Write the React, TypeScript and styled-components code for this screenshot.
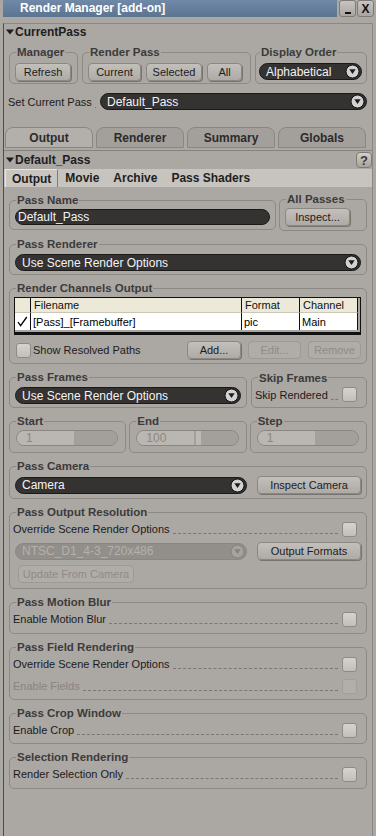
import styled, { createGlobalStyle } from "styled-components";

const GlobalStyle = createGlobalStyle`
  * { box-sizing: border-box; }
  html, body { margin: 0; padding: 0; background: #aba7a3; }
  body {
    font-family: "Liberation Sans", Arial, sans-serif;
    font-size: 11px;
    color: #1b1b1b;
  }
`;

const Window = styled.div`
  width: 376px;
  height: 836px;
  display: flex;
  flex-direction: column;
  background: #aba7a3;
  overflow: hidden;
`;

const TitleBar = styled.div`
  display: flex;
  height: 17px;
  padding: 0 2px 0 3px;
  gap: 1px;
`;

const Title = styled.div`
  flex: 1;
  margin-right: 1px;
  padding-left: 17px;
  background: linear-gradient(#7089a6, #5a7492);
  color: #fff;
  font-weight: bold;
  font-size: 12px;
  line-height: 17px;
`;

const WinButton = styled.div`
  width: 17px;
  height: 17px;
  display: flex;
  align-items: center;
  justify-content: center;
  background: linear-gradient(#c8c4c0, #a8a4a0);
  border: 1px solid #7e7a76;
  border-radius: 3px;
  font-weight: bold;
  font-size: 12px;
  color: #111;
`;

const MinGlyph = styled.div`
  width: 6px;
  height: 2px;
  margin-top: 8px;
  background: #111;
`;

const Frame = styled.div`
  flex: 1;
  margin: 6px 3px 0;
  border-top: 1px solid #8b8783;
  border-left: 1px solid #4f4c49;
  border-right: 1px solid #8b8783;
  display: flex;
  flex-direction: column;
`;

const SectionHead = styled.div<{ $h?: number }>`
  display: flex;
  align-items: center;
  height: ${(p) => p.$h ?? 15}px;
  padding-left: 2px;
  font-weight: bold;
  font-size: 12px;
  color: #1e1e1e;
`;

const CaretIcon = styled.svg`
  margin-right: 1px;
  flex: none;
`;

const HelpButton = styled.div`
  margin-left: auto;
  width: 16px;
  height: 16px;
  display: flex;
  align-items: center;
  justify-content: center;
  border: 1px solid #7e7a76;
  border-radius: 4px;
  background: linear-gradient(#d2cec9, #a6a29e);
  font-weight: bold;
  font-size: 13px;
  color: #3a3a3a;
`;

const TopRow = styled.div`
  display: flex;
  gap: 4px;
  margin-top: 7px;
  padding: 0 5px;
`;

const Row = styled.div<{ $gap?: number; $mt?: number; $pl?: number }>`
  display: flex;
  align-items: center;
  gap: ${(p) => p.$gap ?? 0}px;
  margin-top: ${(p) => p.$mt ?? 0}px;
  padding-left: ${(p) => p.$pl ?? 0}px;
`;

const Group = styled.fieldset<{ $w?: number; $pt?: number; $pb?: number; $px?: number }>`
  margin: 0;
  min-width: 0;
  ${(p) => (p.$w ? `flex: none; width: ${p.$w}px;` : `flex: 1;`)}
  padding: ${(p) => p.$pt ?? 4}px ${(p) => p.$px ?? 5}px ${(p) => p.$pb ?? 3}px;
  border: 1px solid #8d8985;
  border-radius: 5px;
  display: flex;
  flex-direction: column;
`;

const Legend = styled.legend`
  padding: 0 1px;
  margin-left: 1px;
  font-weight: bold;
  font-size: 11.5px;
  line-height: 12px;
  color: #3b3b3b;
`;

const Button = styled.button<{ $w: number }>`
  flex: none;
  width: ${(p) => p.$w}px;
  height: 18px;
  padding: 0;
  font-family: inherit;
  font-size: 11px;
  color: #1c1c1c;
  background: linear-gradient(#c3bfbb, #aeaaa6);
  border: 1px solid #8b8783;
  border-radius: 4px;
  box-shadow: 1px 1px 0 #77736f;
  &:disabled {
    color: #8f8b87;
    background: #b0aca8;
    border-color: #9d9995;
    box-shadow: none;
  }
`;

const SelectBox = styled.div<{ $w?: number; $disabled?: boolean }>`
  display: flex;
  align-items: center;
  height: 17px;
  ${(p) => (p.$w ? `flex: none; width: ${p.$w}px;` : `flex: 1;`)}
  padding: 0 1px 0 6px;
  border-radius: 9px;
  background: ${(p) => (p.$disabled ? "#928e8a" : "#353232")};
  border: 1px solid ${(p) => (p.$disabled ? "#8a8682" : "#1a1818")};
  color: ${(p) => (p.$disabled ? "#b5b1ad" : "#f3f3f3")};
  font-size: 12px;
  white-space: nowrap;
  overflow: hidden;
`;

const TextBox = styled(SelectBox)`
  height: 18px;
  padding-left: 2px;
`;

const SelectText = styled.span`
  flex: 1;
`;

const Label = styled.span<{ $disabled?: boolean; $ml?: number }>`
  font-size: 11px;
  white-space: nowrap;
  margin-left: ${(p) => p.$ml ?? 0}px;
  color: ${(p) => (p.$disabled ? "#88847f" : "#1b1b1b")};
`;

const Leader = styled.div<{ $mb?: number }>`
  flex: 1;
  align-self: flex-end;
  margin: 0 4px ${(p) => p.$mb ?? 5}px 3px;
  border-bottom: 1px dashed #7b7773;
`;

const Check = styled.div<{ $disabled?: boolean }>`
  flex: none;
  width: 15px;
  height: 15px;
  border-radius: 3px;
  border: 1px solid ${(p) => (p.$disabled ? "#a29e9a" : "#8e8a86")};
  background: ${(p) => (p.$disabled ? "#b2aeaa" : "linear-gradient(#d6d2ce, #c2beba)")};
`;

const CheckRow = styled.div<{ $mt?: number }>`
  display: flex;
  align-items: center;
  height: 20px;
  margin: ${(p) => p.$mt ?? 0}px 4px 0 -2px;
`;

const SetRow = styled.div`
  display: flex;
  align-items: center;
  height: 17px;
  margin-top: 9px;
  padding: 0 5px 0 4px;
`;

const TabStrip = styled.div`
  display: flex;
  gap: 3px;
  height: 24px;
  margin-top: 17px;
  padding-left: 1px;
  border-bottom: 1px solid #85817d;
`;

const Tab = styled.div<{ $active?: boolean }>`
  width: 88px;
  height: 21px;
  display: flex;
  align-items: center;
  justify-content: center;
  border: 1px solid #8a8682;
  border-radius: 8px 8px 0 0;
  background: ${(p) => (p.$active ? "#b3afab" : "#a39f9b")};
  font-weight: bold;
  font-size: 12px;
  color: #2b2b2b;
`;

const SubTabBar = styled.div`
  display: flex;
  height: 18px;
  padding-left: 1px;
  background: #c7c3bf;
`;

const SubTab = styled.div<{ $active?: boolean }>`
  display: flex;
  align-items: center;
  padding: 0 6px;
  font-weight: bold;
  font-size: 12px;
  color: #1e1e1e;
  ${(p) =>
    p.$active
      ? `border-left: 1px solid #e8e4e0; border-top: 1px solid #e8e4e0; border-right: 1px solid #7f7b77; background: #c9c5c1;`
      : `border-left: 1px solid transparent; border-right: 1px solid transparent;`}
`;

const Body = styled.div`
  display: flex;
  flex-direction: column;
  gap: 7px;
  padding: 6px 5px 0;
`;

const Table = styled.div`
  margin-left: -1px;
  display: grid;
  grid-template-columns: 16px 211px 58px 58px;
  border: 1px solid #111;
  border-bottom-width: 3px;
  padding-bottom: 2px;
  background: #a9a5a1;
`;

const HeadCell = styled.div`
  height: 15px;
  padding-left: 3px;
  background: #ece9d8;
  border-right: 1px solid #111;
  border-bottom: 1px solid #c9c6b6;
  font-size: 11px;
  line-height: 15px;
  color: #111;
`;

const Cell = styled.div`
  height: 17px;
  display: flex;
  align-items: center;
  padding-left: 2px;
  background: #fff;
  border-right: 1px solid #111;
  font-size: 11px;
  color: #000;
  white-space: nowrap;
`;

const Slider = styled.div`
  display: flex;
  height: 16px;
  margin: 0 2px 0 1px;
  border: 1px solid #8a8682;
  border-radius: 8px;
  overflow: hidden;
`;

const SliderValue = styled.div`
  width: 57px;
  padding-left: 9px;
  background: #bab6b2;
  color: #8b8783;
  font-size: 12px;
  line-height: 14px;
`;

const SliderTrack = styled.div`
  flex: 1;
  position: relative;
  background: #a39f9b;
`;

const Thumb = styled.div`
  position: absolute;
  top: 0;
  bottom: 0;
  left: 2px;
  width: 5px;
  background: #bdb9b5;
`;

const Spacer = styled.div`
  flex: 1;
`;

const Caret = () => (
  <CaretIcon width="8" height="6" viewBox="0 0 8 6">
    <path d="M0 0.5h8L4 5.5z" fill="#1e1e1e" />
  </CaretIcon>
);

const Arrow = ({ disabled }: { disabled?: boolean }) => (
  <svg width="15" height="15" viewBox="0 0 15 15">
    <circle
      cx="7.5"
      cy="7.5"
      r="6.5"
      fill={disabled ? "#a6a29e" : "#d2d2d2"}
      stroke={disabled ? "#86827e" : "#141414"}
    />
    <path d="M4.3 5.3h6.4L7.5 10z" fill={disabled ? "#86827e" : "#1c1c1c"} />
  </svg>
);

const Select = ({ text, w, disabled }: { text: string; w?: number; disabled?: boolean }) => (
  <SelectBox $w={w} $disabled={disabled}>
    <SelectText>{text}</SelectText>
    <Arrow disabled={disabled} />
  </SelectBox>
);

const CheckLine = ({ label, disabled, mt }: { label: string; disabled?: boolean; mt?: number }) => (
  <CheckRow $mt={mt}>
    <Label $disabled={disabled}>{label}</Label>
    <Leader />
    <Check $disabled={disabled} />
  </CheckRow>
);

const NumField = ({ value, thumb }: { value: number; thumb?: boolean }) => (
  <Slider>
    <SliderValue>{value}</SliderValue>
    <SliderTrack>{thumb && <Thumb />}</SliderTrack>
  </Slider>
);

export default function App() {
  return (
    <Window>
      <GlobalStyle />
      <TitleBar>
        <Title>Render Manager [add-on]</Title>
        <WinButton>
          <MinGlyph />
        </WinButton>
        <WinButton>X</WinButton>
      </TitleBar>

      <Frame>
        <SectionHead>
          <Caret />
          CurrentPass
        </SectionHead>

        <TopRow>
          <Group $w={69} $pt={5} $pb={2}>
            <Legend>Manager</Legend>
            <Row>
              <Button $w={56}>Refresh</Button>
            </Row>
          </Group>
          <Group $w={169} $pt={5} $pb={2}>
            <Legend>Render Pass</Legend>
            <Row $gap={5}>
              <Button $w={53}>Current</Button>
              <Button $w={56}>Selected</Button>
              <Button $w={35}>All</Button>
            </Row>
          </Group>
          <Group $pt={5} $pb={2} $px={3}>
            <Legend>Display Order</Legend>
            <Row>
              <Select text="Alphabetical" w={103} />
            </Row>
          </Group>
        </TopRow>

        <SetRow>
          <Label>Set Current Pass</Label>
          <Leader $mb={2} />
          <Select text="Default_Pass" w={267} />
        </SetRow>

        <TabStrip>
          <Tab $active>Output</Tab>
          <Tab>Renderer</Tab>
          <Tab>Summary</Tab>
          <Tab>Globals</Tab>
        </TabStrip>

        <SectionHead $h={18}>
          <Caret />
          Default_Pass
          <HelpButton>?</HelpButton>
        </SectionHead>

        <SubTabBar>
          <SubTab $active>Output</SubTab>
          <SubTab>Movie</SubTab>
          <SubTab>Archive</SubTab>
          <SubTab>Pass Shaders</SubTab>
        </SubTabBar>

        <Body>
          <Row $gap={3}>
            <Group $w={267} $pt={3} $pb={4}>
              <Legend>Pass Name</Legend>
              <TextBox>Default_Pass</TextBox>
            </Group>
            <Group $pt={3} $pb={4}>
              <Legend>All Passes</Legend>
              <Button $w={65}>Inspect...</Button>
            </Group>
          </Row>

          <Group>
            <Legend>Pass Renderer</Legend>
            <Select text="Use Scene Render Options" />
          </Group>

          <Group $pt={3} $pb={4}>
            <Legend>Render Channels Output</Legend>
            <Table>
              <HeadCell />
              <HeadCell>Filename</HeadCell>
              <HeadCell>Format</HeadCell>
              <HeadCell>Channel</HeadCell>
              <Cell>
                <svg width="11" height="11" viewBox="0 0 11 11">
                  <path d="M1 6.2L3.6 9.6L9.8 1" fill="none" stroke="#000" strokeWidth="1.3" />
                </svg>
              </Cell>
              <Cell>[Pass]_[Framebuffer]</Cell>
              <Cell>pic</Cell>
              <Cell>Main</Cell>
            </Table>
            <Row $gap={7} $mt={6} $pl={1}>
              <Check />
              <Label $ml={-5}>Show Resolved Paths</Label>
              <Spacer />
              <Button $w={54}>Add...</Button>
              <Button $w={53} disabled>
                Edit...
              </Button>
              <Button $w={53} disabled>
                Remove
              </Button>
            </Row>
          </Group>

          <Row $gap={4}>
            <Group $w={238}>
              <Legend>Pass Frames</Legend>
              <Select text="Use Scene Render Options" />
            </Group>
            <Group $pt={1} $pb={2}>
              <Legend>Skip Frames</Legend>
              <CheckLine label="Skip Rendered" />
            </Group>
          </Row>

          <Row $gap={3}>
            <Group $pt={3} $pb={6}>
              <Legend>Start</Legend>
              <NumField value={1} />
            </Group>
            <Group $pt={3} $pb={6}>
              <Legend>End</Legend>
              <NumField value={100} thumb />
            </Group>
            <Group $pt={3} $pb={6}>
              <Legend>Step</Legend>
              <NumField value={1} />
            </Group>
          </Row>

          <Group $pb={4}>
            <Legend>Pass Camera</Legend>
            <Row>
              <Select text="Camera" w={232} />
              <Spacer />
              <Button $w={104}>Inspect Camera</Button>
            </Row>
          </Group>

          <Group $pt={1} $pb={5}>
            <Legend>Pass Output Resolution</Legend>
            <CheckLine label="Override Scene Render Options" />
            <Row $mt={3}>
              <Select text="NTSC_D1_4-3_720x486" w={232} disabled />
              <Spacer />
              <Button $w={104}>Output Formats</Button>
            </Row>
            <Row $mt={5} $pl={3}>
              <Button $w={116} disabled>
                Update From Camera
              </Button>
            </Row>
          </Group>

          <Group $pt={1} $pb={4}>
            <Legend>Pass Motion Blur</Legend>
            <CheckLine label="Enable Motion Blur" />
          </Group>

          <Group $pt={1} $pb={3}>
            <Legend>Pass Field Rendering</Legend>
            <CheckLine label="Override Scene Render Options" />
            <CheckLine label="Enable Fields" disabled mt={2} />
          </Group>

          <Group $pt={1} $pb={3}>
            <Legend>Pass Crop Window</Legend>
            <CheckLine label="Enable Crop" />
          </Group>

          <Group $pt={1} $pb={4}>
            <Legend>Selection Rendering</Legend>
            <CheckLine label="Render Selection Only" />
          </Group>
        </Body>
      </Frame>
    </Window>
  );
}
